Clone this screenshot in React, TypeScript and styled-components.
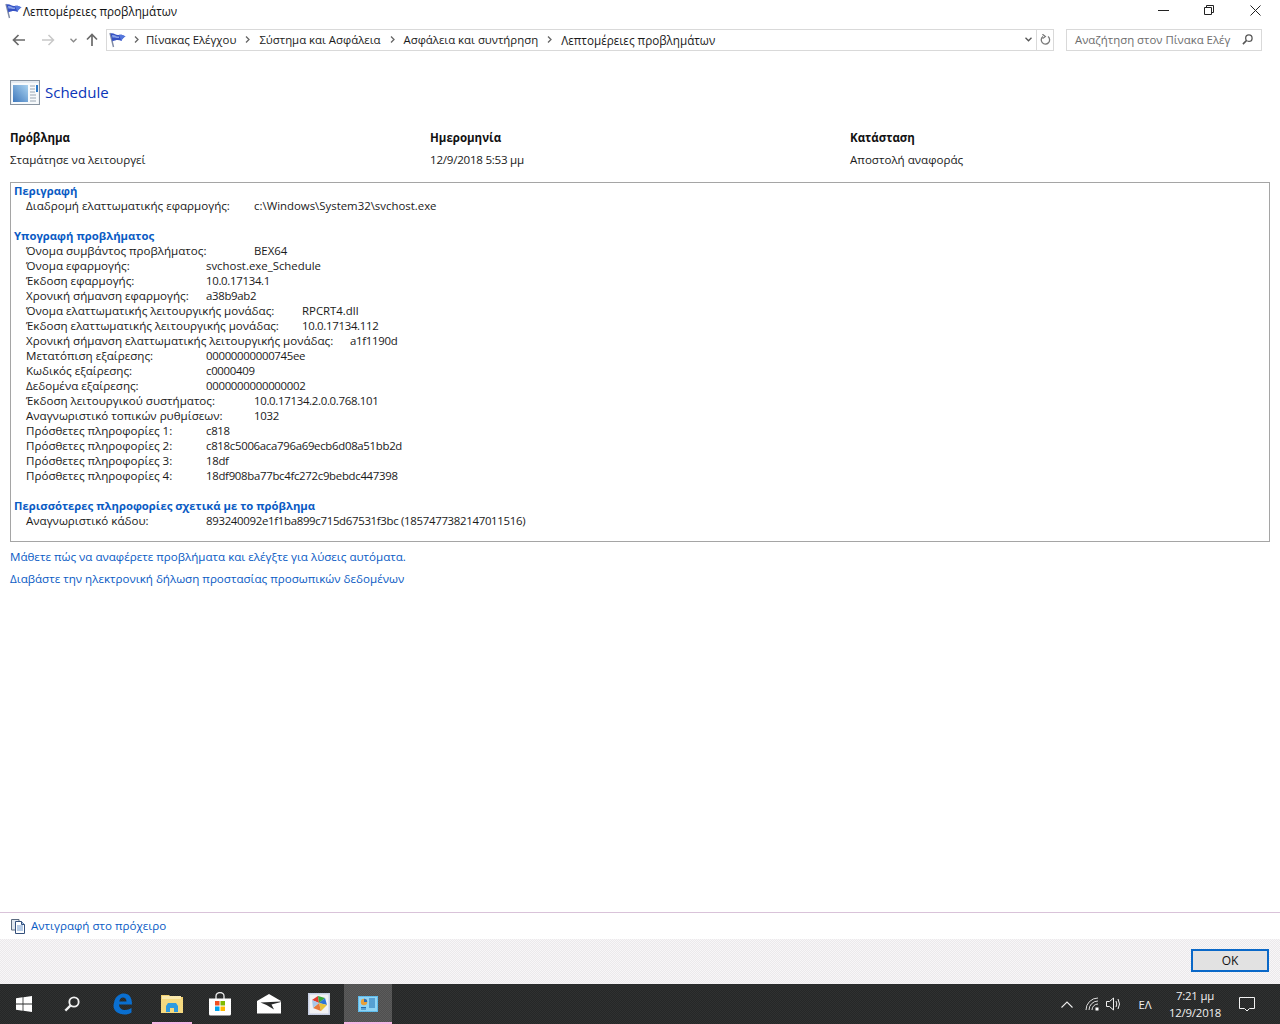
import React from "react";
import styled, { createGlobalStyle } from "styled-components";

const Global = createGlobalStyle`
  html, body { margin: 0; padding: 0; height: 100%; background: #fff; }
  #root { height: 1024px; }
  * { box-sizing: border-box; }
`;

const FONT = `"Open Sans", "Noto Sans", "Liberation Sans", sans-serif`;
const checker = (a: string, b: string) =>
  `repeating-conic-gradient(${a} 0% 25%, ${b} 0% 50%) 0 0 / 2px 2px`;

const Screen = styled.div`
  width: 1280px; height: 1024px; display: flex; flex-direction: column; overflow: hidden;
  font-family: ${FONT}; font-size: 11.6px; color: #1a1a1a; background: #fff;
`;
const TitleBar = styled.div`
  height: 22px; display: flex; align-items: center; padding-left: 5px; flex: none;
`;
const TitleText = styled.span`margin-left: 1px; font-size: 11.7px; color: #111; line-height: 22px; padding-bottom: 1px;`;
const WinControls = styled.div`margin-left: auto; margin-right: 2px; display: flex; height: 22px;`;
const WinBtn = styled.div`
  width: 46px; height: 20px; display: flex; align-items: center; justify-content: center;
`;
const NavBar = styled.div`
  height: 22px; margin-top: 7px; flex: none; display: flex; align-items: center; padding-left: 11px;
`;
const NavIcon = styled.div<{ $w: number }>`
  width: ${(p) => p.$w}px; height: 22px; display: flex; align-items: center; justify-content: center;
`;
const AddressBar = styled.div`
  width: 948px; height: 22px; border: 1px solid #d9d9d9; display: flex; align-items: center; padding: 0 0 1px 2px; font-size: 11.4px;
`;
const Crumb = styled.span`color: #1a1a1a; white-space: nowrap;`;
const LastCrumb = styled(Crumb)`font-size: 11.7px;`;
const CrumbSep = styled.div<{ $w: number }>`
  width: ${(p) => p.$w}px; display: flex; justify-content: center; flex: none;
`;
const AddressEnd = styled.div`
  margin-left: auto; display: flex; height: 20px; align-items: center;
`;
const DropBtn = styled.div`width: 16px; display: flex; justify-content: center;`;
const RefreshBtn = styled.div`
  width: 17px; height: 20px; border-left: 1px solid #d9d9d9; display: flex; align-items: center; justify-content: center;
`;
const SearchBox = styled.div`
  width: 196px; height: 22px; margin-left: 12px; border: 1px solid #d9d9d9; display: flex; align-items: center;
  padding: 0 8px 1px; color: #6d6d6d; justify-content: space-between; white-space: nowrap; font-size: 11.4px;
`;
const Content = styled.main`
  flex: 1; padding: 0 10px; display: flex; flex-direction: column; min-height: 0;
`;
const Heading = styled.div`
  margin-top: 29px; height: 26px; display: flex; align-items: center; gap: 5px;
`;
const HeadingText = styled.span`font-size: 15px; color: #0a35b8; padding-bottom: 2px;`;
const Summary = styled.div`
  margin-top: 24px; display: grid; grid-template-columns: repeat(3, 420px); row-gap: 7px;
`;
const SummaryHead = styled.div`font-weight: 700; font-size: 11.5px; line-height: 15px; color: #111;`;
const SummaryValue = styled.div<{ $num?: boolean }>`
  line-height: 15px; letter-spacing: ${(p) => (p.$num ? "-0.25px" : "0")};
`;
const DetailBox = styled.section`
  margin-top: 15px; width: 1260px; height: 360px; border: 1px solid #a5a5a5; padding: 0 3px;
`;
const SectionTitle = styled.div<{ $gap?: boolean }>`
  font-weight: 700; font-size: 11.3px; color: #0a5bc4; line-height: 15px; margin-top: ${(p) => (p.$gap ? 15 : 0)}px;
`;
const Row = styled.div<{ $col: number }>`
  display: grid; grid-template-columns: ${(p) => p.$col}px 1fr; line-height: 15px; white-space: nowrap;
`;
const RowLabel = styled.span`padding-left: 12px;`;
const RowValue = styled.span<{ $num?: boolean }>`
  font-size: 11.4px; letter-spacing: ${(p) => (p.$num ? "-0.3px" : "0")};
`;
const LinkRow = styled.a<{ $top: number }>`
  display: block; color: #0a5bc4; line-height: 15px; margin-top: ${(p) => p.$top}px;
`;
const CopyBar = styled.div`
  flex: none; height: 27px; border-top: 1px solid #d9c3d9; display: flex; align-items: center; padding: 0 0 1px 10px; gap: 5px;
  color: #0a5bc4;
`;
const ButtonBand = styled.div`
  flex: none; height: 45px; background: ${checker("#f8f6f8", "#ebe9eb")}; display: flex; align-items: center;
  justify-content: flex-end; padding: 0 11px 2px 0;
`;
const OkButton = styled.button`
  width: 78px; height: 23px; border: 2px solid #0a68c8; background: #e2e2e2; font: inherit; font-size: 12px; color: #111; padding: 0;
`;
const Taskbar = styled.footer`
  flex: none; height: 40px; background: ${checker("#252727", "#303131")}; display: flex; align-items: stretch; color: #f0f0f0;
`;
const TaskItem = styled.div<{ $active?: boolean; $open?: boolean; $w?: number }>`
  position: relative; width: ${(p) => p.$w ?? 48}px; display: flex; align-items: center; justify-content: center; flex: none;
  background: ${(p) => (p.$active ? checker("#4f4f4f", "#5c5c5c") : "transparent")};
  ${(p) =>
    p.$open
      ? `&::after { content: ""; position: absolute; bottom: 0; height: 2px; left: ${p.$active ? 0 : 4}px; right: ${p.$active ? 0 : 4}px; background: #f6b6e4; }`
      : ""}
`;
const Tray = styled.div`margin-left: auto; display: flex; align-items: center;`;
const TrayIcon = styled.div<{ $w: number }>`
  width: ${(p) => p.$w}px; height: 40px; display: flex; align-items: center; justify-content: center; font-size: 11.4px;
`;
const Clock = styled.div`
  width: 58px; text-align: center; line-height: 17px; font-size: 11.4px; white-space: nowrap; letter-spacing: -0.2px;
`;

const Flag = () => (
  <svg width="17" height="16" viewBox="0 0 17 16">
    <path d="M1 1 L4.5 15" stroke="#7f8aa4" strokeWidth="1.4" />
    <path d="M1.5 1.5 C5 .5 7 3.5 9.5 3 C12 2.5 14 3 16.5 4.5 C14.5 5.5 13 7 12.5 9 C10 7.5 7 7.5 3.4 9.5 Z" fill="#3652c4" />
    <path d="M3 3 C6 2.5 7.5 5 10 4.5 L10 6 C7.5 6.5 6 5 3.5 5.5 Z" fill="#8aa3e8" />
    <path d="M10 3 C12 2.5 14 3 16.5 4.5 C14.5 5.5 13 7 12.5 9 Z" fill="#5577dc" />
  </svg>
);
const Chev = () => (
  <svg width="5" height="7" viewBox="0 0 5 7"><path d="M1 .5 L4 3.5 L1 6.5" fill="none" stroke="#666" strokeWidth="1.3" /></svg>
);
const ArrowLeft = ({ c }: { c: string }) => (
  <svg width="14" height="12" viewBox="0 0 14 12"><path d="M13 6H2M6.5 1 L1.5 6 L6.5 11" fill="none" stroke={c} strokeWidth="1.7" /></svg>
);
const ArrowRight = ({ c }: { c: string }) => (
  <svg width="14" height="12" viewBox="0 0 14 12"><path d="M1 6H12M7.5 1 L12.5 6 L7.5 11" fill="none" stroke={c} strokeWidth="1.5" /></svg>
);
const ArrowUp = () => (
  <svg width="12" height="14" viewBox="0 0 12 14"><path d="M6 13V2M1 6.5 L6 1.5 L11 6.5" fill="none" stroke="#6a6a6a" strokeWidth="1.7" /></svg>
);
const SmallDown = ({ c = "#888", w = 7 }: { c?: string; w?: number }) => (
  <svg width={w} height="5" viewBox="0 0 7 5"><path d="M.5 .8 L3.5 3.8 L6.5 .8" fill="none" stroke={c} strokeWidth="1.3" /></svg>
);
const Refresh = () => (
  <svg width="11" height="12" viewBox="0 0 11 12">
    <path d="M3 2.5 A4.2 4.2 0 1 0 8 2.6" fill="none" stroke="#777" strokeWidth="1.3" />
    <path d="M2.4 .2 L5.4 2.4 L2.6 4.6" fill="none" stroke="#777" strokeWidth="1.2" />
  </svg>
);
const SearchGlyph = ({ c = "#555", s = 11 }: { c?: string; s?: number }) => (
  <svg width={s} height={s} viewBox="0 0 12 12">
    <circle cx="7.5" cy="4.5" r="3.5" fill="none" stroke={c} strokeWidth="1.4" />
    <path d="M5 7 L1 11" stroke={c} strokeWidth="1.7" />
  </svg>
);
const Minimize = () => <svg width="11" height="1"><rect width="11" height="1" fill="#222" /></svg>;
const Restore = () => (
  <svg width="10" height="10" viewBox="0 0 10 10">
    <path d="M.5 2.5H7.5V9.5H.5Z M2.5 2.5V.5H9.5V7.5H7.5" fill="none" stroke="#222" />
  </svg>
);
const Close = () => (
  <svg width="11" height="11" viewBox="0 0 11 11"><path d="M.5 .5 L10.5 10.5 M10.5 .5 L.5 10.5" stroke="#222" /></svg>
);
const ScheduleIcon = () => (
  <svg width="30" height="26" viewBox="0 0 30 26">
    <rect x=".5" y=".5" width="29" height="24" fill="#e4eaf0" stroke="#8793a0" />
    <rect x="1.5" y="3" width="27" height="21" fill="#f7fafc" />
    <defs>
      <linearGradient id="sch" x1="1" y1="0" x2="0" y2="1">
        <stop offset="0" stopColor="#a8d2f0" /><stop offset="1" stopColor="#3f78bc" />
      </linearGradient>
    </defs>
    <rect x="3" y="5" width="15" height="17" fill="url(#sch)" />
    <path d="M20 6h5M20 9h5M20 12h5M20 15h6M20 18h6M20 21h6" stroke="#9aa6b2" />
    <rect x="26" y="5" width="2" height="7" fill="#2a78c8" />
  </svg>
);
const CopyIcon = () => (
  <svg width="16" height="16" viewBox="0 0 16 16">
    <path d="M1.5 1.5H9V12H1.5Z" fill="#dfe6ee" stroke="#5b6b80" />
    <path d="M5.5 3.5H11.5L14.5 6.5V15.5H5.5Z" fill="#fff" stroke="#34507c" />
    <path d="M11.5 3.5V6.5H14.5" fill="#9fc0e6" stroke="#34507c" />
    <path d="M7 8h6M7 10h6M7 12h6" stroke="#6d97cc" />
  </svg>
);
const WinLogo = () => (
  <svg width="16" height="16" viewBox="0 0 16 16" fill="#fff">
    <path d="M0 2.3 6.6 1.3V7.6H0ZM7.4 1.2 16 0V7.6H7.4ZM0 8.4H6.6V14.7L0 13.7ZM7.4 8.4H16V16L7.4 14.8Z" />
  </svg>
);
const EdgeIcon = () => (
  <svg width="20" height="22" viewBox="-1 0 20 22">
    <path d="M1 10 C2 3 7 .5 11 .5 C16 .5 19 4 19 11.5 H6 C6 15 9 17 12 17 C14.5 17 16.5 16.3 18.5 15 V19.5 C16.5 21 14 21.5 11.5 21.5 C5 21.5 .5 17.5 .5 13 C.5 11 1 10 1 10 Z M6.3 8.5 H13.5 C13.5 6 12 4.5 10 4.5 C8 4.5 6.8 6 6.3 8.5 Z" fill="#0a6fd0" fillRule="evenodd" />
  </svg>
);
const FolderIcon = () => (
  <svg width="22" height="20" viewBox="0 0 22 20">
    <path d="M0 1H8L10 3H22V19H0Z" fill="#f2d06f" />
    <path d="M1 2H20V5H1Z" fill="#fbe9ad" />
    <rect x="0" y="5" width="22" height="14" fill="#f5d97f" />
    <path d="M7 9H15L17 12V18H13V14H9V18H5V12Z" fill="#2e9be0" />
  </svg>
);
const StoreIcon = () => (
  <svg width="24" height="24" viewBox="0 0 24 24">
    <path d="M8 7V4 A4 3.5 0 0 1 16 4 V7" fill="none" stroke="#eee" strokeWidth="1.3" />
    <path d="M1 6.5H23V22 Q23 23.5 21.5 23.5H2.5 Q1 23.5 1 22Z" fill="#fff" />
    <rect x="7" y="9" width="4.5" height="4.5" fill="#f25022" />
    <rect x="12.5" y="9" width="4.5" height="4.5" fill="#7fba00" />
    <rect x="7" y="14.5" width="4.5" height="4.5" fill="#00a4ef" />
    <rect x="12.5" y="14.5" width="4.5" height="4.5" fill="#ffb900" />
  </svg>
);
const MailIcon = () => (
  <svg width="24" height="20" viewBox="0 0 24 20">
    <path d="M0 7 L12 0 L24 7 V19.5 H0 Z" fill="#fff" />
    <path d="M3.5 8.5 L24 7.5 V8 L14.5 10.5 L17 15.5 L9.5 11 Z" fill="#2a2b2b" />
  </svg>
);
const PaintIcon = () => (
  <svg width="22" height="22" viewBox="0 0 22 22">
    <rect width="22" height="22" fill="#c7cfe4" />
    <rect x="1.5" y="1.5" width="19" height="19" fill="#f1f1f4" />
    <path d="M4 7 L10 3 L11 10Z" fill="#e23b2e" />
    <path d="M10 3 L17 5 L11 10Z" fill="#3aa63a" />
    <path d="M17 5 L19 12 L11 10Z" fill="#2d74d6" />
    <path d="M19 12 L13 18 L11 10Z" fill="#e8c23a" />
    <path d="M13 18 L5 15 L11 10Z" fill="#e87a3a" />
    <path d="M5 15 L4 7 L11 10Z" fill="#a8c8e8" />
  </svg>
);
const PanelIcon = () => (
  <svg width="20" height="16" viewBox="0 0 20 16">
    <rect width="20" height="16" fill="#5fbcec" />
    <rect x="1" y="1" width="18" height="14" fill="#8fd4f5" />
    <circle cx="6" cy="6" r="3.2" fill="#e8a03a" />
    <path d="M6 6V2.8A3.2 3.2 0 0 1 9.2 6Z" fill="#2a6cb8" />
    <path d="M3 11.5h5M3 13h5M11 3h6M11 5h6M11 7h6M11 9h6M11 11h6" stroke="#1f6cb0" />
  </svg>
);
const TrayChevron = () => (
  <svg width="12" height="7" viewBox="0 0 12 7"><path d="M.5 6.5 L6 1 L11.5 6.5" fill="none" stroke="#eee" strokeWidth="1.1" /></svg>
);
const WifiIcon = () => (
  <svg width="14" height="14" viewBox="0 0 14 14" fill="none" stroke="#ddd">
    <path d="M1 13 A12 12 0 0 1 13 1" /><path d="M4 13 A9 9 0 0 1 13 4" /><path d="M7 13 A6 6 0 0 1 13 7" />
    <rect x="10.5" y="10.5" width="3" height="3" fill="#fff" stroke="none" />
  </svg>
);
const VolumeIcon = () => (
  <svg width="16" height="14" viewBox="0 0 16 14" fill="none" stroke="#eee">
    <path d="M.5 4.5H3.5L7.5 1V13L3.5 9.5H.5Z" />
    <path d="M10 4 Q11.5 7 10 10" /><path d="M12 2 Q15 7 12 12" />
  </svg>
);
const NotifyIcon = () => (
  <svg width="16" height="15" viewBox="0 0 16 15">
    <path d="M.5 .5H15.5V11.5H10.5L8 14L5.5 11.5H.5Z" fill="none" stroke="#f2f2f2" />
  </svg>
);

const signature: [string, string, number, boolean][] = [
  ["Όνομα συμβάντος προβλήματος:", "BEX64", 240, false],
  ["Όνομα εφαρμογής:", "svchost.exe_Schedule", 192, false],
  ["Έκδοση εφαρμογής:", "10.0.17134.1", 192, true],
  ["Χρονική σήμανση εφαρμογής:", "a38b9ab2", 192, true],
  ["Όνομα ελαττωματικής λειτουργικής μονάδας:", "RPCRT4.dll", 288, false],
  ["Έκδοση ελαττωματικής λειτουργικής μονάδας:", "10.0.17134.112", 288, true],
  ["Χρονική σήμανση ελαττωματικής λειτουργικής μονάδας:", "a1f1190d", 336, true],
  ["Μετατόπιση εξαίρεσης:", "00000000000745ee", 192, true],
  ["Κωδικός εξαίρεσης:", "c0000409", 192, true],
  ["Δεδομένα εξαίρεσης:", "0000000000000002", 192, true],
  ["Έκδοση λειτουργικού συστήματος:", "10.0.17134.2.0.0.768.101", 240, true],
  ["Αναγνωριστικό τοπικών ρυθμίσεων:", "1032", 240, true],
  ["Πρόσθετες πληροφορίες 1:", "c818", 192, true],
  ["Πρόσθετες πληροφορίες 2:", "c818c5006aca796a69ecb6d08a51bb2d", 192, true],
  ["Πρόσθετες πληροφορίες 3:", "18df", 192, true],
  ["Πρόσθετες πληροφορίες 4:", "18df908ba77bc4fc272c9bebdc447398", 192, true],
];

export default function App() {
  return (
    <Screen>
      <Global />
      <TitleBar>
        <Flag />
        <TitleText>Λεπτομέρειες προβλημάτων</TitleText>
        <WinControls>
          <WinBtn><Minimize /></WinBtn>
          <WinBtn><Restore /></WinBtn>
          <WinBtn><Close /></WinBtn>
        </WinControls>
      </TitleBar>
      <NavBar>
        <NavIcon $w={16}><ArrowLeft c="#6a6a6a" /></NavIcon>
        <NavIcon $w={41}><ArrowRight c="#c8c8c8" /></NavIcon>
        <NavIcon $w={10}><SmallDown /></NavIcon>
        <NavIcon $w={28}><ArrowUp /></NavIcon>
        <AddressBar>
          <Flag />
          <CrumbSep $w={20}><Chev /></CrumbSep>
          <Crumb>Πίνακας Ελέγχου</Crumb>
          <CrumbSep $w={23}><Chev /></CrumbSep>
          <Crumb>Σύστημα και Ασφάλεια</Crumb>
          <CrumbSep $w={23}><Chev /></CrumbSep>
          <Crumb>Ασφάλεια και συντήρηση</Crumb>
          <CrumbSep $w={23}><Chev /></CrumbSep>
          <LastCrumb>Λεπτομέρειες προβλημάτων</LastCrumb>
          <AddressEnd>
            <DropBtn><SmallDown c="#555" w={9} /></DropBtn>
            <RefreshBtn><Refresh /></RefreshBtn>
          </AddressEnd>
        </AddressBar>
        <SearchBox>
          <span>Αναζήτηση στον Πίνακα Ελέγ</span>
          <SearchGlyph />
        </SearchBox>
      </NavBar>
      <Content>
        <Heading>
          <ScheduleIcon />
          <HeadingText>Schedule</HeadingText>
        </Heading>
        <Summary>
          <SummaryHead>Πρόβλημα</SummaryHead>
          <SummaryHead>Ημερομηνία</SummaryHead>
          <SummaryHead>Κατάσταση</SummaryHead>
          <SummaryValue>Σταμάτησε να λειτουργεί</SummaryValue>
          <SummaryValue $num>12/9/2018 5:53 μμ</SummaryValue>
          <SummaryValue>Αποστολή αναφοράς</SummaryValue>
        </Summary>
        <DetailBox>
          <SectionTitle>Περιγραφή</SectionTitle>
          <Row $col={240}>
            <RowLabel>Διαδρομή ελαττωματικής εφαρμογής:</RowLabel>
            <RowValue>c:\Windows\System32\svchost.exe</RowValue>
          </Row>
          <SectionTitle $gap>Υπογραφή προβλήματος</SectionTitle>
          {signature.map(([label, value, col, num]) => (
            <Row key={label} $col={col}>
              <RowLabel>{label}</RowLabel>
              <RowValue $num={num}>{value}</RowValue>
            </Row>
          ))}
          <SectionTitle $gap>Περισσότερες πληροφορίες σχετικά με το πρόβλημα</SectionTitle>
          <Row $col={192}>
            <RowLabel>Αναγνωριστικό κάδου:</RowLabel>
            <RowValue $num>893240092e1f1ba899c715d67531f3bc (1857477382147011516)</RowValue>
          </Row>
        </DetailBox>
        <LinkRow $top={7}>Μάθετε πώς να αναφέρετε προβλήματα και ελέγξτε για λύσεις αυτόματα.</LinkRow>
        <LinkRow $top={7}>Διαβάστε την ηλεκτρονική δήλωση προστασίας προσωπικών δεδομένων</LinkRow>
      </Content>
      <CopyBar>
        <CopyIcon />
        <span>Αντιγραφή στο πρόχειρο</span>
      </CopyBar>
      <ButtonBand>
        <OkButton>OK</OkButton>
      </ButtonBand>
      <Taskbar>
        <TaskItem><WinLogo /></TaskItem>
        <TaskItem><SearchGlyph c="#f0f0f0" s={16} /></TaskItem>
        <TaskItem $w={52}><EdgeIcon /></TaskItem>
        <TaskItem $open><FolderIcon /></TaskItem>
        <TaskItem><StoreIcon /></TaskItem>
        <TaskItem $w={50}><MailIcon /></TaskItem>
        <TaskItem $w={50}><PaintIcon /></TaskItem>
        <TaskItem $active $open><PanelIcon /></TaskItem>
        <Tray>
          <TrayIcon $w={26}><TrayChevron /></TrayIcon>
          <TrayIcon $w={24}><WifiIcon /></TrayIcon>
          <TrayIcon $w={20}><VolumeIcon /></TrayIcon>
          <TrayIcon $w={42}>ΕΛ</TrayIcon>
          <Clock>
            <div>7:21 μμ</div>
            <div>12/9/2018</div>
          </Clock>
          <TrayIcon $w={46}><NotifyIcon /></TrayIcon>
          <TrayIcon $w={10} />
        </Tray>
      </Taskbar>
    </Screen>
  );
}
